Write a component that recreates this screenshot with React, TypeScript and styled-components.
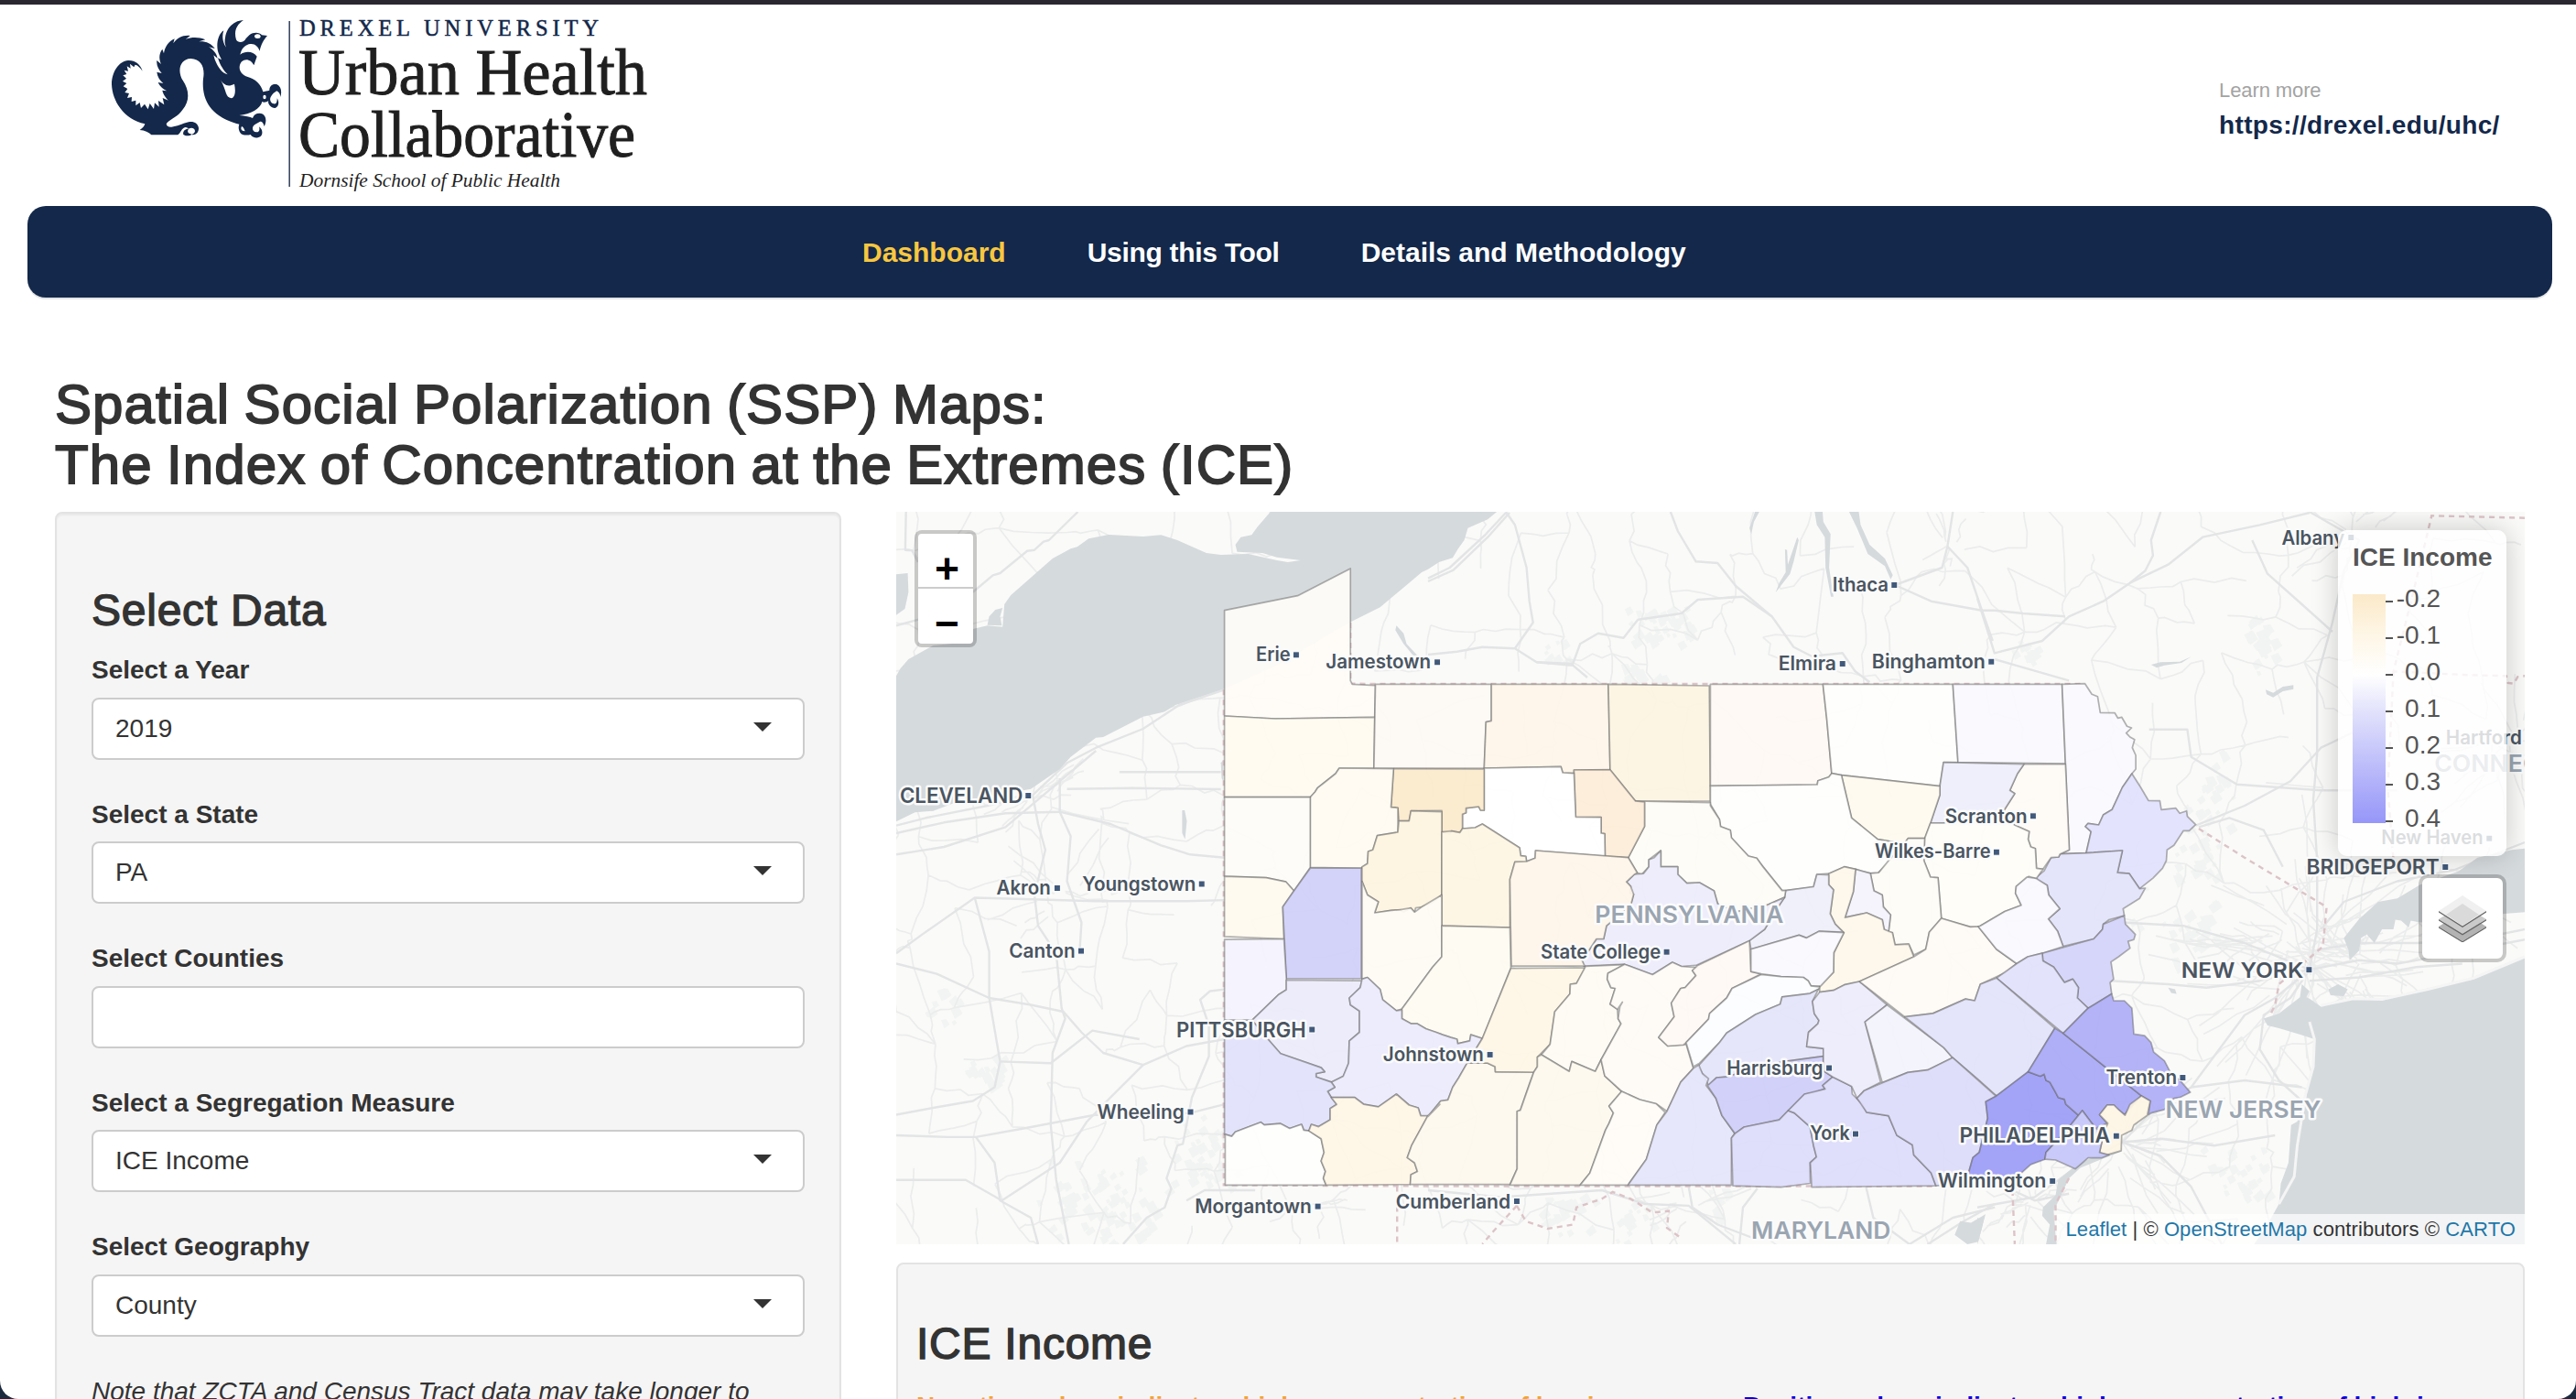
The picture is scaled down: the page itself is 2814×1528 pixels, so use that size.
import React from "react";
import styled, { createGlobalStyle } from "styled-components";

const sans = `"Liberation Sans", Arial, Helvetica, sans-serif`;
const serif = `"Liberation Serif", "Times New Roman", serif`;
const navy = "#13284a";

const GlobalStyle = createGlobalStyle`
  * { box-sizing: border-box; }
  body { margin: 0; background: #1c2a40; font-family: ${sans}; color: #333; }
  h1, h2, p { margin: 0; }
`;

/* ---------- map geometry ---------- */

// Points are written as <sheet><x>,<y>; every map sheet has its own origin and scale.
const sheets: Record<string, [number, number, number, number]> = {
  A: [960, 540, 2.529, 3],
  B: [1560, 540, 2.529, 3],
  C: [2160, 540, 2.3976, 3],
  D: [960, 940, 2.529, 2.6667],
  E: [1560, 940, 2.529, 2.6667],
  F: [2160, 940, 2.3976, 2.6667],
};

const project = (token: string): [number, number] => {
  const [ox, oy, sx, sy] = sheets[token[0]];
  const [x, y] = token.slice(1).split(",").map(Number);
  return [+(ox + x / sx).toFixed(1), +(oy + y / sy).toFixed(1)];
};

const points = (s: string) =>
  s.trim().split(/\s+/).map((t) => project(t).join(",")).join(" ");

const counties: [string, string][] = [
  ["#fffcf7", "A955,380 A1157,332 A1303,243 A1303,610 A1308,622 A1372,626 A1370,730 A1095,735 A955,726"],
  ["#fffbf0", "A955,726 A1095,735 A1370,730 A1368,897 A1272,897 A1262,915 A1230,945 A1212,962 A1205,975 A1192,992 A955,992"],
  ["#fdf9f4", "A1372,622 B175,622 B175,742 B160,746 B155,897 A1368,897"],
  ["#fef5e8", "B175,622 B498,622 B503,902 B403,903 B403,914 B372,912 B367,892 B155,897 B160,746 B175,742"],
  ["#fcf4e1", "B498,622 B777,627 B780,1005 B573,1005 B503,902"],
  ["#fef9f3", "B780,622 B1091,622 B1102,740 B1115,914 B1107,926 B1077,938 B1075,951 B780,955"],
  ["#fefefc", "B1091,622 B1450,622 B1464,878 B1424,878 B1414,956 B1142,920 B1115,914 B1102,740"],
  ["#faf9fe", "B1450,622 C222,622 C231,882 B1464,878"],
  ["#faf9fe", "C222,622 C282,620 C300,655 C315,662 C322,715 C360,716 C368,733 C378,730 C392,760 C404,765 C390,782 C400,795 C412,803 C406,830 C415,855 C415,900 C405,915 C380,960 C353,1033 C330,1050 C318,1083 C290,1078 C283,1088 C298,1105 C285,1175 C217,1178 C241,1165 C231,880"],
  ["#e1e1fd", "C405,915 C428,960 C448,1003 C478,1004 C482,1033 C520,1028 C530,1045 C548,1037 C550,1055 C572,1082 C555,1102 C540,1102 C515,1150 C497,1165 C495,1200 C485,1225 F460,51 F425,82 F398,38 F367,35 C380,1167 C285,1175 C298,1105 C283,1088 C290,1078 C318,1083 C330,1050 C353,1033 C380,960"],
  ["#e2e2fb", "C217,1178 C285,1175 C380,1167 F367,35 F398,38 F425,82 F440,80 F425,110 F382,140 F385,160 F345,172 F330,185 F328,200 F305,228 F225,250 F210,205 F186,170 F216,140 F187,100 F183,72 F150,52 F175,30 C193,1190 C213,1188"],
  ["#fefbf6", "C122,884 C231,884 C241,1165 C217,1178 C213,1188 C193,1190 C172,1228 C155,1225 C152,1160 C140,1155 C133,1130 C136,1105 C97,1083 C70,1035 C98,980 C85,970 C105,915"],
  ["#eeeefc", "B1424,878 C122,884 C105,915 C85,970 C98,980 C70,1035 B1424,1077 B1388,1077 B1414,985 B1414,956"],
  ["#fefaee", "B1142,920 B1414,956 B1414,985 B1388,1077 B1372,1127 B1326,1127 B1315,1145 B1242,1130 B1170,1060"],
  ["#fefdf8", "B1388,1077 B1424,1077 C70,1035 C97,1083 C136,1105 C133,1130 C140,1155 C152,1160 C155,1225 C172,1228 F155,52 F135,46 F102,75 F100,95 F115,130 F72,148 F8,190 E1520,192 E1498,193 E1418,168 E1409,50 E1388,48 E1370,0 B1372,1127"],
  ["#fefefd", "B780,955 B1075,951 B1077,938 B1107,926 B1115,914 B1142,920 B1170,1060 B1242,1130 B1315,1145 B1265,1215 B1243,1240 E1222,37 E1181,25 E1150,18 E1107,38 E1074,40 E1065,76 E988,87 E978,87 E920,10 B925,1220 B908,1192 B885,1185 B838,1125 B835,1100 B808,1088 B805,1065 B780,1015"],
  ["#fefcf6", "B1315,1145 B1326,1127 B1372,1127 B1370,1200 E1388,48 E1409,50 E1418,168 E1385,208 E1375,258 E1342,275 E1328,243 E1290,245 E1283,210 E1272,208 E1278,158 E1258,135 E1255,100 E1232,88 E1222,37 E1245,35 E1272,0"],
  ["#f4f3fd", "E1181,25 E1222,37 E1232,88 E1255,100 E1258,135 E1278,158 E1272,208 E1260,200 E1255,172 E1212,152 E1152,166 E1175,90"],
  ["#fdf8e9", "E1107,38 E1150,18 E1181,25 E1175,90 E1152,166 E1212,152 E1255,172 E1260,200 E1283,210 E1290,245 E1328,243 E1342,280 E1192,352 E1150,362 E1120,378 E1082,383 E1082,365 E1120,325 E1121,268 E1149,210 E1125,185 E1111,155 E1120,85 E1107,70"],
  ["#efeffb", "E988,87 E1065,76 E1074,40 E1107,42 E1107,70 E1120,85 E1111,155 E1125,185 E1147,208 E1080,206 E1045,225 E1025,217 E892,258 E888,233 E930,200 E970,130 E985,107"],
  ["#fefcf5", "B573,1005 B780,1010 B780,1020 B805,1065 B808,1088 B835,1100 B838,1125 B885,1185 B908,1192 B925,1220 E978,87 E988,87 E985,107 E935,130 E850,150 E800,125 E790,88 E750,64 E715,66 E690,40 E690,18 E643,17 B643,1167 B610,1197 B610,1220 B590,1245 B578,1240 B553,1190 B598,1088 B598,1008"],
  ["#edecfc", "B643,1167 B643,1220 B690,1220 E690,40 E715,66 E750,64 E790,88 E800,125 E850,150 E935,130 E985,107 E970,130 E930,200 E888,233 E740,305 E700,308 E675,296 E620,332 E543,302 E430,307 E425,290 E445,260 E465,228 E485,228 E493,190 E560,130 E568,98 E558,95 E560,75 E548,62 E570,40 E595,38 E610,18 B610,1197 B625,1190"],
  ["#fdedd8", "B403,903 B503,902 B573,1005 B598,1008 B598,1088 B553,1190 B489,1185 B488,1112 B478,1110 B478,1058 B408,1057"],
  ["#ffffff", "B155,897 B367,892 B372,912 B403,914 B408,1057 B478,1058 B478,1110 B488,1112 B489,1185 B297,1167 B296,1192 B272,1202 B270,1186 B256,1184 B253,1158 B150,1080 B130,1092 B95,1095 B95,1048 B105,1043 B105,1028 B140,1023 B145,1035 B155,1035"],
  ["#fbeacb", "A1422,899 B155,900 B155,1035 B145,1035 B140,1023 B105,1028 B105,1043 B95,1048 B95,1095 B88,1108 B65,1103 B60,1112 B38,1106 B38,1036 A1470,1037 A1465,1070 A1437,1070 A1434,1027 A1415,1025"],
  ["#fffbf1", "A1272,897 A1422,899 A1415,1025 A1434,1027 A1434,1107 A1377,1118 A1365,1165 A1352,1170 A1350,1210 A1332,1225 A1192,1222 A1192,992 A1205,975 A1212,962 A1230,945 A1262,915"],
  ["#fefcf7", "A955,992 A1192,992 A1192,1222 D1192,20 D1147,88 D1125,62 D1070,50 D955,46"],
  ["#fdf4e0", "A1437,1070 A1465,1070 A1470,1037 B38,1040 B38,1110 D1555,100 D1530,122 D1500,135 D1483,138 D1480,150 D1470,138 D1450,150 D1440,143 D1415,145 D1370,152 D1380,120 D1350,100 D1335,60 D1335,18 A1350,1210 A1352,1170 A1365,1165 A1377,1118 A1434,1107"],
  ["#fef5e3", "B38,1106 B65,1103 B88,1108 B95,1095 B130,1092 B150,1080 B253,1158 B256,1184 B270,1186 B272,1203 B240,1204 E226,55 E226,195 E38,190"],
  ["#fef5e8", "B297,1167 B553,1190 B578,1240 E570,40 E548,62 E560,75 E568,98 E560,130 E493,190 E485,228 E465,228 E445,260 E425,290 E433,307 E230,307 E226,55 B240,1204 B272,1203 B296,1192"],
  ["#fefaef", "D955,46 D1070,50 D1125,62 D1147,88 D1116,135 D1119,228 D955,221"],
  ["#d0d0fa", "D1192,22 D1333,22 D1333,344 D1126,344 D1116,135 D1147,88"],
  ["#f4f3fe", "D955,230 D1119,228 D1126,344 D1126,376 D1105,390 D1031,465 D955,465"],
  ["#fefbf4", "D1335,60 D1350,100 D1380,120 D1370,152 D1415,145 D1440,143 D1470,138 D1480,150 D1500,135 D1555,100 E38,280 D1530,310 D1445,432 D1430,437 D1392,405 D1385,375 D1350,340 D1335,345"],
  ["#fefbf1", "E38,190 E226,195 E229,312 E150,518 E118,507 E115,525 E82,533 E80,520 E63,515 E40,507 D1540,500 D1512,490 D1487,475 D1470,475 D1445,460 D1445,432 D1530,310 E38,280"],
  ["#ebebfb", "D1126,348 D1335,350 D1330,370 D1300,400 D1303,420 D1328,438 D1328,500 D1300,525 D1298,590 D1283,628 D1250,645 D1208,630 D1208,620 D1232,615 D1222,603 D1110,562 D1075,520 D1031,465 D1105,390 D1126,376"],
  ["#ecebfd", "D1335,345 D1350,340 D1385,375 D1392,405 D1430,437 D1445,435 D1445,460 D1470,475 D1487,475 D1512,490 D1540,500 E40,507 E63,515 E80,520 E82,533 E115,525 E118,507 E150,518 E108,590 E85,632 E68,660 E55,697 E35,700 E0,745 D1497,743 D1490,720 D1465,712 D1430,680 D1380,717 D1340,710 D1315,690 D1250,690 D1240,672 D1260,660 D1250,645 D1283,628 D1298,590 D1300,525 D1328,500 D1328,438 D1303,420 D1300,400 D1330,370"],
  ["#e1e1fb", "D955,465 D1031,465 D1075,520 D1110,562 D1222,603 D1232,615 D1208,620 D1208,630 D1250,645 D1260,660 D1240,672 D1250,690 D1265,710 D1247,722 D1247,755 D1215,775 D1195,768 D1188,787 D1174,785 D1168,768 D1135,780 D1110,766 D1065,770 D1055,762 D985,790 D975,803 D955,797"],
  ["#fefefd", "D957,797 D975,803 D985,790 D1055,762 D1065,770 D1110,766 D1135,780 D1168,768 D1174,785 D1188,787 D1222,810 D1230,850 D1222,875 D1234,905 D1228,925 D1236,945 D957,945"],
  ["#fef5e5", "D1250,690 D1315,690 D1340,710 D1380,717 D1430,680 D1465,712 D1490,720 D1497,743 D1517,743 D1472,830 D1460,865 D1480,880 D1488,905 D1470,915 D1468,943 D1236,945 D1228,925 D1234,905 D1222,875 D1230,850 D1222,810 D1188,787 D1195,768 D1215,775 D1247,755 D1247,722 D1265,710"],
  ["#fdf9ee", "E0,745 E35,700 E55,697 E68,660 E85,632 E108,590 E165,590 E185,600 E186,615 E292,616 E280,650 E255,727 E246,730 E246,898 E226,943 D1468,943 D1470,915 D1488,905 D1480,880 D1460,865 D1472,830 D1517,743 D1550,710"],
  ["#fef6e5", "E229,314 E435,312 E410,358 E393,360 E392,388 E350,440 E337,535 E302,572 E302,600 E292,616 E186,615 E185,600 E165,590 E108,590 E150,518"],
  ["#fefbf3", "E435,308 E543,303 E497,328 E495,345 E505,370 E517,372 E503,418 E523,433 E525,460 E533,475 E478,580 E462,614 E397,585 E390,614 E313,565 E337,535 E350,440 E392,388 E393,360 E410,358"],
  ["#fdf9ee", "E313,565 E390,614 E397,585 E462,614 E478,580 E488,627 E535,672 E500,715 E512,735 E500,765 E490,785 E447,910 E420,945 E226,945 E246,898 E246,730 E255,727 E292,616 E302,600 E302,572"],
  ["#fefbf6", "E543,302 E620,332 E675,296 E700,308 E745,312 E730,320 E740,335 E710,370 E698,372 E672,415 E680,455 E637,515 E662,540 E713,535 E733,605 E698,645 E660,730 E630,708 E585,696 E535,672 E488,627 E478,580 E533,475 E525,460 E530,425 E537,412 E523,433 E503,418 E517,372 E505,370 E495,345 E497,328"],
  ["#fffcf7", "E535,672 E585,696 E630,708 E655,733 E632,770 E603,870 E552,945 E420,945 E447,910 E490,785 E500,765 E512,735 E500,715"],
  ["#fef9f3", "E745,305 E888,233 E892,323 E920,330 E840,372 E825,400 E778,445 E775,462 E713,530 E705,537 E662,540 E637,515 E680,455 E672,415 E698,372 E710,370 E740,335 E730,320"],
  ["#faf9fe", "E892,258 E1025,217 E1045,225 E1080,206 E1149,210 E1121,268 E1120,325 E1085,365 E1058,365 E1050,350 E1037,340 E975,338 E920,330 E892,323"],
  ["#fcfdff", "E920,332 E975,338 E1037,340 E1050,350 E1058,365 E1082,368 E1078,375 E1055,387 E978,397 E973,418 E905,448 E825,502 E805,530 E750,590 E733,600 E713,530 E775,462 E778,445 E825,400 E840,372"],
  ["#e4e4fb", "E978,397 E1055,387 E1078,375 E1062,410 E1067,445 E1080,465 E1077,475 E1051,500 E1046,542 E1092,547 E1093,570 E985,585 E900,605 E825,630 E797,632 E775,655 E755,615 E745,600 E805,530 E825,502 E905,448 E973,418"],
  ["#e5e5fb", "E733,605 E748,595 E758,620 E775,635 E768,655 E795,692 E812,743 E847,795 E838,808 E838,945 E552,945 E603,870 E632,770 E660,730 E698,645"],
  ["#cfcefa", "E797,632 E825,630 E900,605 E985,585 E1092,570 E1092,612 E1118,630 E1090,655 E1097,665 E1067,675 E1040,680 E995,728 E970,755 E873,776 E848,795 E812,743 E795,692 E772,655"],
  ["#dddcfb", "E848,795 E873,776 E970,755 E995,728 E1012,735 E1055,775 E1065,830 E1073,863 E1055,880 E1056,940 E975,951 E842,947 E838,808"],
  ["#dddcfb", "E995,728 E1040,680 E1097,665 E1090,655 E1118,630 E1170,657 E1172,680 E1200,710 E1212,733 E1272,743 E1295,800 E1338,828 E1342,857 E1390,910 E1403,947 E1060,951 E1056,880 E1073,863 E1065,830 E1055,775 E1012,735"],
  ["#edecfc", "E1082,383 E1120,378 E1150,362 E1192,352 E1268,420 E1207,470 E1250,645 E1205,670 E1185,692 E1170,657 E1118,630 E1092,612 E1092,547 E1046,542 E1051,500 E1077,475 E1080,465 E1067,445 E1062,410"],
  ["#f3f3fd", "E1268,420 E1425,545 E1449,574 E1380,610 E1325,617 E1255,647 E1207,470"],
  ["#fefaf4", "E1192,352 E1342,280 E1375,258 E1385,208 E1418,168 E1498,193 E1520,192 F50,258 F103,300 F75,325 F8,360 E1510,408 E1485,403 E1395,445 E1317,455"],
  ["#f9f9fe", "E1520,192 F8,190 F72,148 F115,130 F100,95 F102,75 F130,48 F155,52 F183,72 F187,100 F216,140 F186,170 F210,205 F225,250 F170,270 F132,280 F103,300 F50,258"],
  ["#d3d3fa", "F170,270 F305,228 F328,200 F330,185 F385,160 F388,185 F414,215 F410,230 F395,235 F400,255 F370,280 F350,295 F357,345 F348,355 F352,388 F290,430 F262,400 F265,370 F250,345 F228,355 F200,310 F172,292"],
  ["#e1e1fc", "F170,270 F172,292 F200,310 F228,355 F250,345 F265,370 F262,400 F290,430 F225,503 F50,342 F103,300 F132,280"],
  ["#e2e2fb", "E1317,455 E1395,445 E1485,403 E1510,408 F8,360 F50,342 F203,488 F133,615 F50,685 F0,635 E1449,574 E1425,545"],
  ["#dddcfa", "E1255,647 E1325,617 E1380,610 E1449,574 E1566,683 F50,685 F22,702 F27,750 F5,850 E1505,865 E1493,910 E1425,945 E1403,947 E1390,910 E1342,857 E1338,828 E1295,800 E1272,743 E1212,733 E1185,692 E1205,670"],
  ["#9c9cf8", "F50,685 F133,615 F165,628 F175,622 F180,640 F190,645 F205,675 F212,690 F228,695 F232,710 F265,742 F230,790 F180,850 F177,870 F140,885 F110,915 E1560,945 E1470,945 E1493,910 E1505,865 F5,850 F27,750 F22,702"],
  ["#a9a9f8", "F203,488 F225,503 F430,685 F385,740 F365,722 F358,712 F340,712 F320,740 F340,765 F310,780 F275,728 F265,742 F232,710 F228,695 F212,690 F205,675 F190,645 F180,640 F175,622 F165,628 F133,615"],
  ["#aeadf8", "F290,430 F352,388 F357,408 F385,408 F405,430 F410,505 F438,510 F455,530 F462,558 F490,583 F505,615 F535,645 F558,675 F530,690 F515,692 F510,698 F490,725 F455,735 F448,740 F453,700 F430,685 F225,503"],
  ["#fdf4e3", "F430,685 F453,700 F445,742 F410,770 F405,785 F378,800 F377,845 F340,857 F320,850 F332,790 F342,765 F320,740 F340,712 F358,712 F370,725 F387,742 F400,710"],
  ["#c6c6fa", "F275,728 F310,780 F332,790 F320,850 F345,857 F325,866 F290,866 F257,898 F205,872 F177,870 F180,850 F230,790"],
];

const water = [
  "A48,595 A60,570 A82,540 A150,495 A210,488 A262,440 A300,430 A342,434 A347,360 A365,330 A480,210 A530,178 A548,172 A580,145 A635,132 A730,138 A780,133 A825,150 A905,192 A945,198 A1020,195 A1100,216 A1130,222 A1165,216 A1100,206 A1060,192 A990,188 A985,165 A1000,140 A1030,133 A1045,108 A1082,57 B190,57 B165,82 B110,110 B100,150 B82,180 B68,208 B30,222 B0,245 A1500,255 A1450,305 A1385,370 A1300,420 A1200,490 A1100,560 A955,637 A820,690 A790,712 A730,728 A620,795 A600,797 A530,860 A500,900 A420,965 A300,990 A210,1010 A150,1037 A100,1042 A48,1072",
  "A48,262 A80,258 A82,320 A72,375 A48,395",
  "F750,460 F790,445 F845,398 F850,360 F870,380 F862,398 F870,402 F900,425 F985,402 F1060,405 F1180,372 F1300,345 F1434,280 F1434,1117 F725,1117 F760,1060 F790,1000 F795,940 F815,880 F822,770 F838,760 F860,680 F880,600 F883,520 F850,508 F790,488 F760,480",
  "F960,225 F1000,170 F1050,120 F1100,110 F1160,70 C1260,1235 C1310,1190 C1400,1165 C1434,1160 F1434,150 F1380,155 F1330,165 F1160,180 F1135,175 F1130,195 F1110,175 F1095,172 F1090,200 F1060,200 F1040,240 F1020,215 F1005,225 F1000,262 F975,290 F972,260",
  "F250,895 F212,930 F205,975 F172,1010 F170,1035 F190,1060 F180,1117 F207,1117 F200,1020 F215,985 F240,925 F270,895 F320,872 F375,848 F378,838 F290,870",
  "E1540,1030 E1500,1055 E1470,1050 E1455,1090 E1490,1117 E1520,1110 E1530,1070",
  "F0,1117 F12,1070 F20,1030 F8,1045 F0,1040",
  "B1068,57 B1090,57 B1092,90 B1112,130 B1108,240 B1120,335 B1113,335 B1098,240 B1096,140 B1074,100",
  "B1163,57 B1190,57 B1195,100 B1220,165 B1262,210 B1284,265 B1278,278 B1262,235 B1215,195 B1185,110",
  "B1020,140 B1024,150 B1010,220 B1000,260 B960,322 B970,290 B988,255 B986,180 B992,182 B994,230",
  "B903,57 B915,57 B900,90 B893,130 B888,110",
  "A1430,430 A1450,455 A1458,490 A1490,530 A1478,530 A1450,490 A1427,445",
  "A342,372 A335,400 A340,430 A300,428 A305,400 A322,378",
  "A838,1035 A845,1035 A851,1070 A846,1130 A838,1110",
  "A945,880 A952,870 A952,940 A947,930",
  "C755,640 C775,650 C800,630 C828,625 C828,638 C800,645 C775,665 C758,655",
  "C455,558 C480,550 C530,548 C560,532 C535,552 C490,560 C470,568",
  "F500,370 F518,375 F522,388 F508,385",
  "F920,375 F945,360 F970,375 F960,395 F925,392",
];

const mainRoads = [
  "A48,430 A110,410 A262,318 A315,265 A335,258 A410,185 A430,182 A455,155 A470,150 A550,57",
  "A75,57 A73,182 A92,184 A108,222",
  "A48,1085 A130,1060 A300,1020 A425,985 A520,880 A600,830 A730,768 A830,690 A955,640",
  "A48,1110 A180,1075 A350,1045 A500,1040 A640,1080 A780,1150 A860,1180 A955,1190",
  "A425,985 A440,1080 A460,1165 D430,100 D440,190 D490,270 D505,430 D515,460 D480,560 D475,770 D490,930 D525,1117",
  "A48,1180 A180,1155 A350,1090 A520,920 A600,840",
  "A500,930 A500,1040 A530,1120 D520,60 D560,180 D555,262",
  "A665,910 A945,910",
  "A520,965 A700,962 A945,966",
  "D48,800 D190,805 D268,805 D400,780 D600,740 D700,745 D860,735 D955,710",
  "D48,270 D120,215 D265,108 D400,112 D600,118 D850,118 D955,115",
  "D48,300 D160,330 D305,400 D420,420 D510,440 D560,500 D620,560 D730,595 D850,540 D955,520",
  "D265,108 D305,265 D305,400 D335,585 D320,660 D260,700 D150,720 D48,740",
  "D335,585 D475,590 D590,495 D720,520",
  "D730,595 D640,690 D575,760 D500,880 D340,990 D240,930 D48,930",
  "D268,805 D320,880 D335,990 D420,1040 D440,1117",
  "D955,375 D915,380 D888,405 D912,480 D912,570 D865,690 D840,825 D825,830 D795,925 D808,955 D790,1010 D740,1040 D675,1117",
  "D850,990 D900,960 D1040,960",
  "B0,275 B60,240 B160,130 B215,60",
  "B0,285 B70,248 B165,140 B225,60",
  "B0,525 B80,515 B150,500 B240,505 B300,550 B400,560 B440,600",
  "B300,550 B400,555 B420,490 B470,455 B540,470 B580,410 B700,390 B745,345 B870,335 B950,400 B1010,500 B1060,530 B1145,520 B1180,580 B1220,615",
  "B670,57 B690,120 B740,220 B800,225 B850,300 B950,400",
  "B215,57 B240,100 B272,240 B280,350 B290,420 B240,505",
  "B1290,297 B1420,240 B1435,170 B1450,57",
  "B1435,170 B1490,240 B1530,380 B1560,480",
  "B1290,297 B1390,350 B1530,380 C45,380 C120,390 C230,400",
  "C0,340 C45,520 C170,480 C240,400 C330,350 C400,290 C500,230 C590,140 C740,100 C870,60",
  "C480,57 C455,150 C460,200 C440,250 C400,290",
  "C45,540 C100,560 C240,610",
  "C870,57 C930,100 C1000,150 C960,250 C930,420 C890,600 C890,850 C880,1000 C890,1200 F890,200 F870,318",
  "C720,150 C760,260 C850,360 C930,450",
  "C450,770 C550,770 C560,860 C680,950 C900,970 C1100,970",
  "C572,1085 C700,1020 C820,940 C900,830 C1050,740",
  "C580,1090 C660,1060 C750,1100 C800,1220",
  "F870,318 F780,400 F700,450 F640,540 F560,660 F450,740 F380,820 F250,900 F150,980 F0,1010",
  "F380,820 F480,860 F560,950 F640,1117",
  "F870,318 F820,400 F750,450 F740,550 F790,640 F850,700 F830,860",
  "F350,350 F500,360 F600,370 F740,350 F870,318",
  "F380,180 F540,190 F700,240 F870,318",
  "F560,660 F700,640 F850,660",
  "F380,820 F480,810 F620,830 F780,800",
  "F870,318 F1000,290 F1100,300 F1200,280 F1434,230",
  "F890,260 F1000,240 F1150,240 F1300,230 F1434,200",
  "F870,350 F1000,340 F1150,310 F1270,300",
  "F900,200 F960,120 F1100,60 C1250,1230 C1434,1140",
  "E0,960 E200,980 E480,960 E600,1000 E720,1005 E850,1117",
  "E720,950 E730,1010 E800,1060 E900,1100",
  "E910,955 E870,1010 E860,1117",
  "E1210,950 E1230,1040 E1330,1117 E1450,1040 E1566,1010",
  "E1380,1117 E1480,1050 E1566,1000",
  "F92,960 F150,990 F240,970",
];

const borders = [
  "C580,1095 C700,1190 F915,135 F905,250 F790,360 F780,420 F765,455",
  "C1434,77 C1190,70 C1140,330 C1090,580 C1290,592 C1385,595 C1390,618 C1405,620 C1415,598 C1434,595",
  "C1090,580 C1075,960 C1090,1200",
  "D1432,948 D1432,1117",
  "F92,960 F98,1117",
  "A953,640 A953,1258 D953,945 E0,948 E1403,948",
  "A1303,420 A1303,620 A1372,621 B0,621 B1566,621 C280,621",
  "E245,1005 E180,1080 E150,1117",
  "E245,1005 E270,1050 E330,1072 E400,1060 E410,1010 E480,985 E510,965 E560,985 E620,1025 E665,1020 E660,1070 E700,1100",
  "F240,925 F205,1000 F205,1117",
];

// Minor roads: a seeded mesh of jittered junctions joined by wavy segments.
const minorRoads = (() => {
  let seed = 7;
  const rnd = () => ((seed = (seed * 16807) % 2147483647) / 2147483647);
  const step = 46;
  const cols = 40;
  const rows = 19;
  const grid = Array.from({ length: rows }, (_, r) =>
    Array.from({ length: cols }, (_, c) => [
      965 + c * step + (rnd() - 0.5) * 34,
      545 + r * step + (rnd() - 0.5) * 34,
    ]),
  );
  const wave = (a: number[], b: number[]) => {
    let d = `M${a[0].toFixed(1)},${a[1].toFixed(1)}`;
    for (let i = 1; i <= 4; i++) {
      const t = i / 4;
      const j = i < 4 ? 7 : 0;
      d += `L${(a[0] + (b[0] - a[0]) * t + (rnd() - 0.5) * j).toFixed(1)},${(a[1] + (b[1] - a[1]) * t + (rnd() - 0.5) * j).toFixed(1)}`;
    }
    return d;
  };
  let d = "";
  for (let r = 0; r < rows - 1; r++)
    for (let c = 0; c < cols - 1; c++) {
      if (rnd() < 0.52) d += wave(grid[r][c], grid[r][c + 1]);
      if (rnd() < 0.62) d += wave(grid[r][c], grid[r + 1][c]);
      if (rnd() < 0.08) d += wave(grid[r][c], grid[r + 1][c + 1]);
    }
  // Dense street fans around the large cities.
  const hubs: [string, number, number][] = [
    ["F870,300", 40, 120], ["F380,820", 34, 85], ["A425,1000", 14, 75], ["C990,110", 14, 65],
    ["D493,100", 10, 55], ["F1000,300", 22, 80], ["C1400,800", 16, 80], ["F800,230", 22, 85],
    ["E720,1000", 8, 50], ["D1213,1007", 7, 42], ["F140,990", 14, 50], ["B1435,170", 7, 45],
  ];
  hubs.forEach(([t, n, len]) => {
    const [x, y] = project(t);
    for (let i = 0; i < n; i++) {
      const a = rnd() * Math.PI * 2;
      const s = rnd() * len * 0.5;
      const l = len * (0.4 + rnd() * 0.8);
      const sx = x + Math.cos(a) * s;
      const sy = y + Math.sin(a) * s;
      const b = a + (rnd() - 0.5) * 1.6;
      d += wave([sx, sy], [sx + Math.cos(b) * l, sy + Math.sin(b) * l]);
    }
  });
  return d;
})();

// Faint parkland blotches.
const parks = (() => {
  let seed = 23;
  const rnd = () => ((seed = (seed * 16807) % 2147483647) / 2147483647);
  const areas: [string, number, number, number][] = [
    ["D620,1000", 75, 55, 70], ["D880,850", 45, 50, 40], ["D290,620", 35, 20, 22], ["D170,420", 25, 30, 12],
    ["B640,430", 45, 30, 40], ["B575,590", 30, 12, 16], ["B350,520", 16, 20, 10], ["C740,480", 24, 34, 26],
    ["C580,1150", 30, 50, 26], ["C610,960", 25, 45, 22], ["F520,150", 60, 60, 34], ["F680,900", 45, 40, 30],
    ["E370,1020", 36, 26, 26], ["E560,1060", 25, 24, 16], ["E790,1000", 10, 24, 10], ["C120,510", 18, 16, 12],
  ];
  let d = "";
  areas.forEach(([t, w, h, n]) => {
    const [x, y] = project(t);
    for (let i = 0; i < n; i++) {
      const px = x + (rnd() + rnd() - 1) * w;
      const py = y + (rnd() + rnd() - 1) * h;
      const r = 3 + rnd() * 6;
      d += `M${px.toFixed(1)},${py.toFixed(1)}l${r.toFixed(1)},${(-r * rnd()).toFixed(1)}l${(r * 0.6).toFixed(1)},${r.toFixed(1)}l${(-r).toFixed(1)},${(r * 0.7).toFixed(1)}z`;
    }
  });
  return d;
})();

type Place = { name: string; from: string; to: string; dot?: string; caps?: boolean };
const places: Place[] = [
  { name: "CLEVELAND", from: "A58,1012", to: "A398,1012", dot: "A413,987", caps: true },
  { name: "Erie", from: "A1042,545", to: "A1137,545", dot: "A1153,526" },
  { name: "Jamestown", from: "A1235,570", to: "A1525,570", dot: "A1543,550" },
  { name: "Ithaca", from: "B1117,318", to: "B1272,318", dot: "B1288,297" },
  { name: "Elmira", from: "B968,575", to: "B1128,575", dot: "B1145,555" },
  { name: "Binghamton", from: "B1226,571", to: "B1540,571", dot: "B1556,548" },
  { name: "Albany", from: "C797,164", to: "C962,164", dot: "C979,141" },
  { name: "Hartford", from: "C1227,818", to: "C1426,818" },
  { name: "New Haven", from: "C1058,1145", to: "C1325,1145", dot: "C1341,1127" },
  { name: "BRIDGEPORT", from: "C862,1244", to: "C1210,1244", dot: "C1226,1221", caps: true },
  { name: "Scranton", from: "B1428,1077", to: "C131,1077", dot: "C146,1054" },
  { name: "Wilkes-Barre", from: "B1234,1191", to: "C35,1191", dot: "C50,1172" },
  { name: "Akron", from: "D325,98", to: "D475,98", dot: "D493,80" },
  { name: "Youngstown", from: "D562,87", to: "D876,87", dot: "D892,68" },
  { name: "Canton", from: "D360,283", to: "D543,283", dot: "D559,263" },
  { name: "PITTSBURGH", from: "D822,514", to: "D1180,514", dot: "D1197,492", caps: true },
  { name: "Johnstown", from: "D1393,583", to: "E154,583", dot: "E171,565" },
  { name: "Wheeling", from: "D603,752", to: "D844,752", dot: "D861,732" },
  { name: "Morgantown", from: "D873,1027", to: "D1196,1027", dot: "D1213,1007" },
  { name: "Cumberland", from: "D1428,1012", to: "E228,1012", dot: "E245,992" },
  { name: "State College", from: "E311,286", to: "E643,286", dot: "E659,266" },
  { name: "Harrisburg", from: "E825,623", to: "E1091,623", dot: "E1108,604" },
  { name: "York", from: "E1055,814", to: "E1165,814", dot: "E1181,796" },
  { name: "PHILADELPHIA", from: "E1468,821", to: "F348,821", dot: "F364,802", caps: true },
  { name: "Wilmington", from: "E1408,952", to: "F181,952", dot: "F197,933" },
  { name: "Trenton", from: "F337,651", to: "F523,651", dot: "F538,632" },
  { name: "NEW YORK", from: "F534,342", to: "F854,342", dot: "F869,318", caps: true },
];
const regions: Place[] = [
  { name: "PENNSYLVANIA", from: "E461,180", to: "E982,180" },
  { name: "MARYLAND", from: "E893,1100", to: "E1278,1100" },
  { name: "NEW JERSEY", from: "F493,749", to: "F900,749" },
  { name: "CONNECTICUT", from: "C1197,908", to: "C1672,908" },
];

/* ---------- styled parts ---------- */

const Page = styled.div`
  width: 2814px;
  height: 1528px;
  overflow: hidden;
  background: #fff;
  border-top: 5px solid #2a2731;
  border-radius: 0 0 20px 20px;
`;
const Header = styled.header`
  height: 220px;
  display: flex;
  justify-content: space-between;
`;
const LogoArt = styled.svg`
  display: block;
  width: 760px;
  height: 220px;
  text { font-family: ${serif}; }
`;
const LearnMore = styled.div`
  width: 390px;
  padding-top: 79px;
  display: flex;
  flex-direction: column;
`;
const Hint = styled.span`
  font-size: 22px;
  line-height: 30px;
  color: #a3a3a3;
  letter-spacing: -0.1px;
`;
const SiteLink = styled.a`
  font-size: 28px;
  line-height: 40px;
  margin-top: 3px;
  font-weight: 700;
  letter-spacing: 0.35px;
  color: ${navy};
`;
const Nav = styled.nav`
  margin: 0 26px 0 30px;
  height: 100px;
  border-radius: 20px;
  background: ${navy};
  box-shadow: 0 2px 0 #e4e4e6;
  display: flex;
  align-items: center;
  gap: 89px;
  padding-left: 912px;
`;
const NavItem = styled.a<{ $active?: boolean; $track?: number }>`
  color: ${(p) => (p.$active ? "#f8c740" : "#fff")};
  font-size: 30px;
  font-weight: 700;
  line-height: 40px;
  padding-top: 2px;
  letter-spacing: ${(p) => p.$track ?? 0}px;
  white-space: nowrap;
`;
const Title = styled.h1`
  margin: 84px 0 18px 60px;
  font-size: 60px;
  line-height: 66px;
  font-weight: 400;
  letter-spacing: 1.1px;
  word-spacing: -2.4px;
  -webkit-text-stroke: 1.8px #333;
`;
const Columns = styled.main`
  display: grid;
  grid-template-columns: 859px 1779px;
  column-gap: 60px;
  padding-left: 60px;
`;
const Well = styled.section`
  background: #f5f5f5;
  border: 2px solid #e3e3e3;
  border-radius: 8px;
`;
const Sidebar = styled(Well)`
  height: 1100px;
  padding: 79px 38px 0;
  box-shadow: inset 0 2px 2px rgba(0, 0, 0, 0.05);
`;
const SubTitle = styled.h2`
  font-size: 48px;
  line-height: 53px;
  font-weight: 400;
  letter-spacing: 0.75px;
  -webkit-text-stroke: 1.4px #333;
`;
const FieldGroup = styled.div`
  height: 157.5px;
  display: flex;
  flex-direction: column;
  &:first-of-type { margin-top: 19px; }
`;
const Label = styled.label`
  font-size: 28px;
  line-height: 40px;
  font-weight: 700;
  margin-bottom: 9.5px;
`;
const Control = styled.div`
  height: 68px;
  border: 2px solid #ccc;
  border-radius: 8px;
  background: #fff;
  padding: 0 34px 0 24px;
  display: flex;
  align-items: center;
  justify-content: space-between;
  font-size: 28px;
`;
const Caret = styled.i`
  border: 10px solid transparent;
  border-top-color: #333;
  border-bottom-width: 0;
  margin-top: -4px;
`;
const Note = styled.p`
  font-size: 28px;
  line-height: 40px;
  font-style: italic;
  white-space: nowrap;
`;
const MapBox = styled.div`
  position: relative;
  height: 800px;
  overflow: hidden;
  background: #fafaf8;
`;
const MapArt = styled.svg`
  display: block;
  width: 1779px;
  height: 800px;
`;
const PlaceText = styled.text<{ $caps?: boolean }>`
  font-family: Inter, "Open Sans", sans-serif;
  font-size: ${(p) => (p.$caps ? 22.5 : 21)}px;
  font-weight: 600;
  fill: #4a5561;
  stroke: #fbfbfb;
  stroke-width: 5px;
  stroke-linejoin: round;
  paint-order: stroke;
`;
const RegionText = styled(PlaceText)`
  font-size: 25.5px;
  fill: #9aa5b1;
`;
const ZoomControl = styled.div`
  position: absolute;
  left: 20px;
  top: 20px;
  width: 68px;
  border: 4px solid rgba(0, 0, 0, 0.2);
  border-radius: 8px;
  background: #fff;
  background-clip: padding-box;
`;
const ZoomButton = styled.div`
  height: 58px;
  padding: 13px 0 0 3px;
  text-align: center;
  font: 700 46px/58px "Liberation Mono", monospace;
  color: #000;
  & + & { height: 62px; border-top: 2px solid #ccc; }
`;
const Legend = styled.div`
  position: absolute;
  right: 20px;
  top: 20px;
  width: 184px;
  height: 356px;
  padding: 16px;
  border-radius: 10px;
  background: rgba(255, 255, 255, 0.8);
  box-shadow: 0 0 30px rgba(0, 0, 0, 0.2);
  color: #555;
  font-size: 28px;
`;
const LegendTitle = styled.div`
  font-weight: 700;
  line-height: 28px;
  white-space: nowrap;
`;
const Scale = styled.div`
  display: flex;
  margin-top: 26px;
`;
const Ramp = styled.div`
  width: 36px;
  height: 250px;
  background: linear-gradient(#fbe9c9, #fef6e6 17.8%, #fff 35.2%, #e2e2fc 51%, #c9c9fb 67%, #b0b0fa 83%, #9696f9);
`;
const Ticks = styled.div`
  margin-top: -12px;
`;
const Tick = styled.div`
  height: 40px;
  width: 60px;
  display: flex;
  align-items: center;
  justify-content: space-between;
  line-height: 40px;
  &::before { content: ""; width: 8px; height: 2px; background: #555; }
`;
const TickText = styled.span`
  padding-bottom: 6px;
  line-height: 34px;
`;
const LayersButton = styled.div`
  position: absolute;
  right: 20px;
  top: 396px;
  width: 96px;
  height: 96px;
  border: 4px solid rgba(0, 0, 0, 0.2);
  border-radius: 10px;
  background: #fff;
  background-clip: padding-box;
  display: grid;
  place-items: center;
`;
const Attribution = styled.div`
  position: absolute;
  right: 0;
  bottom: 0;
  height: 33px;
  padding: 0 10px;
  background: rgba(255, 255, 255, 0.7);
  font-size: 22px;
  line-height: 33px;
  letter-spacing: 0.09px;
  white-space: nowrap;
  a { color: #1f77a8; }
`;
const Results = styled(Well)`
  margin-top: 20px;
  height: 300px;
  padding: 60px 20px 0;
`;
const Explain = styled.div`
  display: grid;
  grid-template-columns: 903px 1fr;
  margin-top: 22px;
`;
const Meaning = styled.p<{ $tone: string }>`
  font-size: 28px;
  line-height: 40px;
  font-weight: 700;
  white-space: nowrap;
  color: ${(p) => p.$tone};
`;

/* ---------- components ---------- */

const Logo = () => (
  <LogoArt viewBox="0 5 760 220">
    <g transform="translate(100 10) scale(.33333)" fill={navy}>
      <path d="M167,203 C160,180 142,167 120,168 C90,170 66,205 66,247 C68,300 105,362 175,376 C173,384 168,389 158,396 C175,397 187,403 196,412 L283,412 C292,405 294,394 302,389 C308,385 315,388 318,392 C306,391 298,402 301,411 C309,417 321,416 329,410 C316,408 312,402 318,392 C328,386 339,390 339,400 C338,406 334,409 328,411 C341,414 352,404 351,389 C349,374 334,366 318,370 C295,376 280,384 262,386 C249,387 242,380 247,373 C262,358 283,352 298,330 C325,298 318,262 300,235 C280,205 288,163 325,162 C362,163 372,195 366,228 C360,290 385,352 484,377 C479,390 484,408 497,412 C507,414 517,412 521,411 C527,421 546,426 556,415 C562,406 560,393 549,385 C553,398 547,404 540,403 C529,402 525,392 530,383 C535,377 543,374 550,370 C556,366 562,370 566,384 C573,370 574,354 562,344 C548,338 532,343 528,357 C520,352 505,350 484,348 C520,345 555,325 559,303 C565,307 574,304 580,300 C576,308 586,325 602,324 C614,320 616,303 608,292 C609,305 604,312 597,310 C586,307 583,296 587,288 C592,278 600,272 607,268 C615,272 619,280 619,288 C624,272 622,254 608,247 C594,242 582,252 583,266 C576,268 568,269 562,271 C556,246 535,228 512,222 C485,212 478,190 492,172 C505,160 524,166 532,184 L542,155 C530,138 505,136 487,149 C492,128 502,120 515,115 C533,110 545,120 551,137 C556,115 563,102 576,87 L558,85 C552,75 530,74 518,84 L506,96 C500,110 480,112 474,100 C466,72 474,52 498,36 C464,38 442,62 438,94 C436,104 436,112 441,125 C429,108 427,88 433,70 C412,84 407,122 417,146 C421,156 424,160 426,166 L414,160 C422,185 432,200 446,214 C428,210 415,192 404,165 L400,151 L413,161 C410,145 398,132 384,124 L404,129 C393,112 372,104 352,106 L373,100 C352,91 328,91 308,99 L323,87 C300,84 280,95 268,112 L272,97 C252,106 240,124 237,145 L232,131 C221,145 220,162 228,180 L214,168 C212,185 220,198 230,210 L214,206 C216,222 224,233 235,243 L218,240 C225,255 235,262 247,268 L232,266 C236,282 243,290 252,299 L233,291 L238,313 L219,300 L221,320 L207,307 L204,327 L191,309 L185,328 L174,311 L162,324 L158,306 L145,316 L145,299 L131,303 L132,288 L117,291 L123,276 L109,273 L118,261 L104,253 L115,243 L102,236 L114,227 L103,217 L115,213 L107,200 L120,203 L116,187 L128,194 L126,179 L139,190 L143,182 C152,184 160,192 167,203 Z" />
      <path fill="#fff" d="M423,232 C432,247 446,257 468,245 C473,268 471,290 458,292 C438,289 443,268 423,232 Z M534,90 a10,7 0 1 0 20,-2 a10,7 0 1 0 -20,2 Z M492,384 C487,394 492,400 503,400 C500,392 498,386 492,384 Z M562,288 a5,7 0 1 0 10,0 a5,7 0 1 0 -10,0 Z" />
    </g>
    <rect x="315.4" y="23" width="1.6" height="181" fill="#3c4a66" />
    <text x="327" y="39" fontSize="24.500" fill={navy} stroke={navy} strokeWidth=".5" textLength="327">DREXEL UNIVERSITY</text>
    <text x="326" y="102.5" fontSize="71" fill="#1f1f1f" stroke="#1f1f1f" strokeWidth="1" textLength="381" lengthAdjust="spacingAndGlyphs">Urban Health</text>
    <text x="326" y="170.5" fontSize="71" fill="#1f1f1f" stroke="#1f1f1f" strokeWidth="1" textLength="368" lengthAdjust="spacingAndGlyphs">Collaborative</text>
    <text x="327" y="203.5" fontSize="22" fill="#1f1f1f" fontStyle="italic" textLength="285" lengthAdjust="spacingAndGlyphs">Dornsife School of Public Health</text>
  </LogoArt>
);

const PlaceLabel = ({ place, region }: { place: Place; region?: boolean }) => {
  const [x, y] = project(place.from);
  const [x2] = project(place.to);
  const dot = place.dot && project(place.dot);
  const T = region ? RegionText : PlaceText;
  return (
    <>
      <T x={x} y={y} $caps={place.caps} textLength={x2 - x} lengthAdjust="spacingAndGlyphs">
        {place.name}
      </T>
      {dot && <rect x={dot[0] - 3.5} y={dot[1] - 3.5} width="7" height="7" fill="#41597a" stroke="#fff" strokeWidth="1" />}
    </>
  );
};

const Choropleth = () => (
  <MapArt viewBox="979 559 1779 800">
    <path d={parks} fill="#f1f4f2" />
    <path d={minorRoads} fill="none" stroke="#ebecec" strokeWidth="1.7" />
    <g fill="none" stroke="#e3e4e5" strokeWidth="2.4" strokeLinejoin="round">
      {mainRoads.map((r) => <polyline key={r} points={points(r)} />)}
    </g>
    <g fill="#d5dadd">
      {water.map((w) => <polygon key={w} points={points(w)} />)}
    </g>
    <g fill="none" stroke="#f4f5f4" strokeWidth="3">
      <polyline points={points("F870,470 F883,520 F880,600 F860,680 F838,830 F830,920 F790,1000")} />
      <polyline points={points("F900,422 F985,402 F1060,404 F1180,375 F1300,342 F1434,280")} />
    </g>
    <g fill="none" stroke="#dcc3c8" strokeWidth="2.4" strokeDasharray="6 5">
      {borders.map((b) => <polyline key={b} points={points(b)} />)}
    </g>
    <g fillOpacity=".93" stroke="#666" strokeOpacity=".5" strokeWidth="1.7" strokeLinejoin="round">
      {counties.map(([fill, shape]) => <polygon key={shape} fill={fill} points={points(shape)} />)}
    </g>
    {regions.map((p) => <PlaceLabel key={p.name} place={p} region />)}
    {places.map((p) => <PlaceLabel key={p.name} place={p} />)}
  </MapArt>
);

const LayersIcon = () => (
  <svg width="52" height="52" viewBox="0 0 52 52">
    <path d="M0 35 26 19 52 35 26 51Z" fill="#b3b3b3" />
    <path d="M0 35 26 51 52 35V36.500L26 52.500 0 36.500Z" fill="#666" />
    <path d="M0 27 26 11 52 27 26 43Z" fill="#cacaca" />
    <path d="M0 27 26 43 52 27V28.500L26 44.500 0 28.500Z" fill="#666" />
    <path d="M0 18 26 1 52 18 26 35Z" fill="#f0f0f0" />
    <path d="M8 22 26 10 44 22 26 34Z" fill="#dadada" />
    <path d="M0 18 26 34.500 52 18V19.500L26 36 0 19.500Z" fill="#666" />
  </svg>
);

const fields: { label: string; value?: string }[] = [
  { label: "Select a Year", value: "2019" },
  { label: "Select a State", value: "PA" },
  { label: "Select Counties" },
  { label: "Select a Segregation Measure", value: "ICE Income" },
  { label: "Select Geography", value: "County" },
];

const ticks = ["-0.2", "-0.1", "0.0", "0.1", "0.2", "0.3", "0.4"];

export default function App() {
  return (
    <>
      <GlobalStyle />
      <Page>
        <Header>
          <Logo />
          <LearnMore>
            <Hint>Learn more</Hint>
            <SiteLink>https://drexel.edu/uhc/</SiteLink>
          </LearnMore>
        </Header>
        <Nav>
          <NavItem $active>Dashboard</NavItem>
          <NavItem $track={-0.3}>Using this Tool</NavItem>
          <NavItem>Details and Methodology</NavItem>
        </Nav>
        <Title>
          Spatial Social Polarization (SSP) Maps:
          <br />
          The Index of Concentration at the Extremes (ICE)
        </Title>
        <Columns>
          <Sidebar>
            <SubTitle>Select Data</SubTitle>
            {fields.map((f) => (
              <FieldGroup key={f.label}>
                <Label>{f.label}</Label>
                <Control>
                  {f.value && <span>{f.value}</span>}
                  {f.value && <Caret />}
                </Control>
              </FieldGroup>
            ))}
            <Note>Note that ZCTA and Census Tract data may take longer to</Note>
          </Sidebar>
          <div>
            <MapBox>
              <Choropleth />
              <ZoomControl>
                <ZoomButton>+</ZoomButton>
                <ZoomButton>−</ZoomButton>
              </ZoomControl>
              <Legend>
                <LegendTitle>ICE Income</LegendTitle>
                <Scale>
                  <Ramp />
                  <Ticks>
                    {ticks.map((t) => (
                      <Tick key={t}><TickText>{t}</TickText></Tick>
                    ))}
                  </Ticks>
                </Scale>
              </Legend>
              <LayersButton><LayersIcon /></LayersButton>
              <Attribution>
                <a>Leaflet</a> | © <a>OpenStreetMap</a> contributors © <a>CARTO</a>
              </Attribution>
            </MapBox>
            <Results>
              <SubTitle>ICE Income</SubTitle>
              <Explain>
                <Meaning $tone="#f0a630">Negative values indicate a higher concentration of low-income</Meaning>
                <Meaning $tone="#0000ee">Positive values indicate a higher concentration of high-income</Meaning>
              </Explain>
            </Results>
          </div>
        </Columns>
      </Page>
    </>
  );
}
